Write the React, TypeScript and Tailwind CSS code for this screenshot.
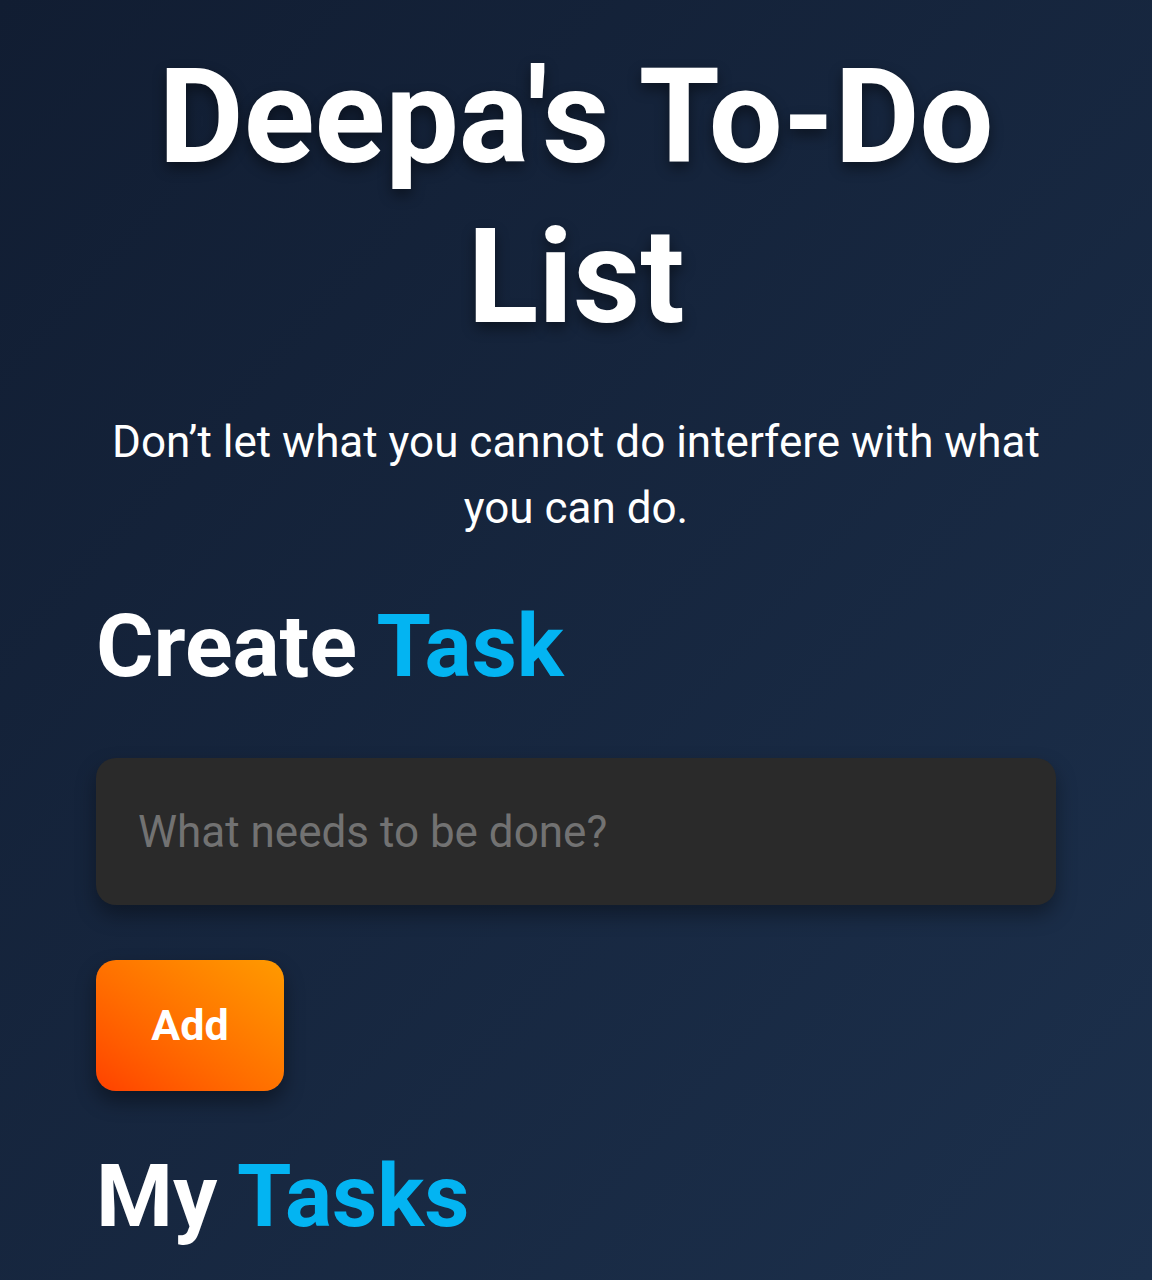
export default function App() {
  return (
    <div className="min-h-[1280px] w-full bg-gradient-to-br from-[#111d32] to-[#1c304c] font-['Roboto',sans-serif] text-white">
      <div className="px-[96px] pt-[37px]">
        <h1 className="text-center text-[131px] font-bold leading-[160px] [text-shadow:0_6px_14px_rgba(0,0,0,0.45)]">
          Deepa's To-Do List
        </h1>

        <p className="mx-auto mt-[52px] max-w-[960px] text-center text-[44px] leading-[66px] text-white">
          Don’t let what you cannot do interfere with what you can do.
        </p>

        <h2 className="mt-[49px] text-[88px] font-bold leading-[112px]">
          Create <span className="text-[#03b4f2]">Task</span>
        </h2>

        <div className="mt-[56px]">
          <input
            type="text"
            placeholder="What needs to be done?"
            className="h-[147px] w-[960px] rounded-[20px] bg-[#2a2a2a] px-[42px] text-[44px] text-white placeholder:text-[#727272] shadow-[0_10px_20px_rgba(0,0,0,0.35)] outline-none"
          />
        </div>

        <button className="mt-[55px] flex h-[131px] w-[188px] items-center justify-center rounded-[20px] bg-gradient-to-tr from-[#ff4000] to-[#ff9a00] text-[43px] font-bold text-white shadow-[0_10px_20px_rgba(0,0,0,0.4)]">
          Add
        </button>

        <h2 className="mt-[49px] text-[88px] font-bold leading-[112px]">
          My <span className="text-[#03b4f2]">Tasks</span>
        </h2>
      </div>
    </div>
  );
}
